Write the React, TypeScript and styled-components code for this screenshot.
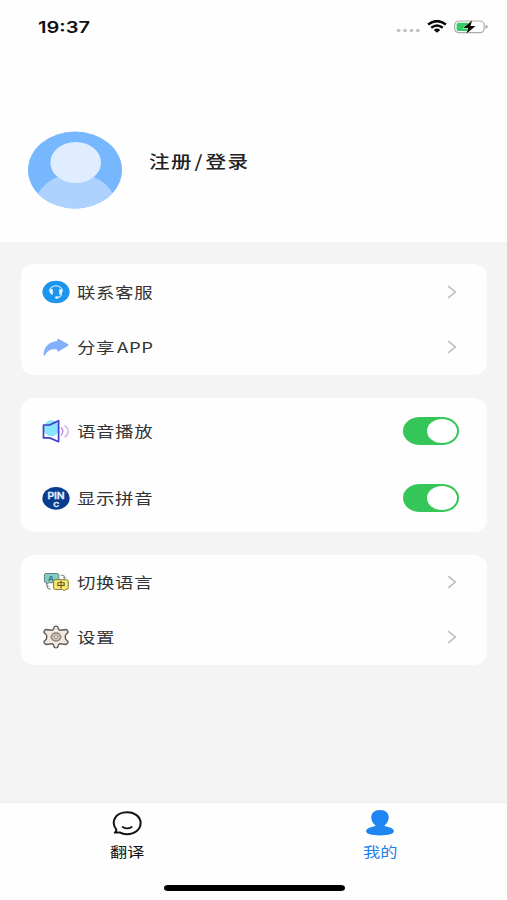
import React from "react";
import styled, { createGlobalStyle } from "styled-components";

const GlobalStyle = createGlobalStyle`
  * { box-sizing: border-box; }
  html, body { margin: 0; padding: 0; }
  body {
    background: #f3f3f3;
    font-family: "Noto Sans CJK SC", "Noto Sans", sans-serif;
    color: #333;
  }
  svg { display: block; flex: none; }
`;

const Screen = styled.div`
  width: 507px;
  height: 900px;
  display: flex;
  flex-direction: column;
  overflow: hidden;
  background: #f4f4f4;
`;

const Header = styled.header`
  height: 242px;
  background: #fefefe;
  flex: none;
`;

const StatusBar = styled.div`
  height: 54px;
  padding: 0 18px 0 38px;
  display: flex;
  align-items: center;
  justify-content: space-between;
`;

const Clock = styled.span`
  font: 600 16.2px/20px Inter, sans-serif;
  color: #111;
  transform: scaleX(1.24);
  transform-origin: left center;
`;

const StatusIcons = styled.div`
  display: flex;
  align-items: center;
  gap: 7px;
`;

const Profile = styled.div`
  display: flex;
  padding: 77px 0 0 28px;
  gap: 27px;
`;

const ProfileName = styled.span`
  margin-top: 17px;
  font-size: 17px;
  line-height: 26px;
  font-weight: 500;
  letter-spacing: 1.1px;
  color: #222;
  white-space: nowrap;
  transform: scaleX(1.21);
  transform-origin: left center;
`;

const Slash = styled.span`
  margin: 0 1.4px 0 1.4px;
`;

const Main = styled.main`
  flex: 1;
  padding: 22px 20px 0 21px;
  display: flex;
  flex-direction: column;
  gap: 23px;
`;

const Card = styled.section<{ $height: number; $inset?: number }>`
  height: ${(p) => p.$height}px;
  padding-top: ${(p) => p.$inset ?? 0}px;
  flex: none;
  display: flex;
  flex-direction: column;
  background: #fefefe;
  border-radius: 14px / 12px;
`;

const Row = styled.div`
  flex: 1;
  display: flex;
  align-items: center;
  padding: 0 28px 1px 21px;
`;

const RowLabel = styled.span`
  margin: -3px 0 0 7px;
  flex: 1;
  font-size: 15.2px;
  line-height: 22px;
  letter-spacing: 0.5px;
  white-space: nowrap;
  transform: scaleX(1.215);
  transform-origin: left center;
`;

const Latin = styled.span`
  margin-left: 1.6px;
`;

const ChevronBox = styled.div`
  padding-right: 2px;
`;

const Toggle = styled.div`
  width: 56px;
  height: 28px;
  padding: 2px;
  display: flex;
  justify-content: flex-end;
  border-radius: 17px / 14px;
  background: #34c658;
`;

const Knob = styled.div`
  width: 30px;
  height: 24px;
  border-radius: 50%;
  background: #fff;
`;

const BottomBar = styled.footer`
  height: 98px;
  flex: none;
  display: flex;
  flex-direction: column;
  align-items: center;
  background: #fefefe;
  border-top: 1px solid #ececec;
`;

const Tabs = styled.nav`
  width: 100%;
  height: 82px;
  display: grid;
  grid-template-columns: 1fr 1fr;
`;

const Tab = styled.div<{ $active?: boolean }>`
  display: flex;
  flex-direction: column;
  align-items: center;
  padding-top: 6px;
  color: ${(p) => (p.$active ? "#1c80f0" : "#111")};
`;

const TabLabel = styled.span`
  margin-top: 4px;
  font-size: 14.2px;
  line-height: 20px;
  transform: scaleX(1.21);
`;

const HomeIndicator = styled.div`
  width: 181px;
  height: 6px;
  margin: 0 0 0 1px;
  border-radius: 4px / 3px;
  background: #000;
`;

const SignalDots = () => (
  <svg width="25" height="14" viewBox="0 0 25 14" fill="#c4c4c4">
    <ellipse cx="3.6" cy="10.5" rx="2" ry="1.7" />
    <ellipse cx="10" cy="10.5" rx="2" ry="1.7" />
    <ellipse cx="16.4" cy="10.5" rx="2" ry="1.7" />
    <ellipse cx="22.8" cy="10.5" rx="2" ry="1.7" />
  </svg>
);

const WifiIcon = () => (
  <svg width="20" height="14" viewBox="0 0 20 14" fill="none" stroke="#090909">
    <path d="M1.1 4.6Q10-2.4 18.9 4.6" strokeWidth="2.5" />
    <path d="M4.2 7.7Q10 3.1 15.8 7.7" strokeWidth="2.4" />
    <path d="M6.8 10Q10 7.2 13.2 10L10 12.7Z" fill="#090909" stroke="none" />
  </svg>
);

const BatteryIcon = () => (
  <svg width="35" height="14" viewBox="0 0 35 14">
    <rect x=".7" y="1" width="29.5" height="11.6" rx="4.5" ry="3.8" fill="#fff" stroke="#aaa" strokeWidth="1.2" />
    <path d="M4.5 2.7H14V11H4.5Q2.6 11 2.6 9.3V4.5Q2.6 2.7 4.5 2.7Z" fill="#32cd63" />
    <path d="M31.5 4.8Q33.8 5.3 33.8 6.8T31.5 8.8Z" fill="#aaa" />
    <path d="M18.2.3 9.4 8.1H14.3L12.3 13.8 21.5 5.9H16.4Z" fill="#080808" stroke="#fff" strokeWidth=".8" paintOrder="stroke" />
  </svg>
);

const Avatar = () => (
  <svg width="94" height="78" viewBox="0 0 94 78">
    <defs>
      <clipPath id="avatar-clip"><ellipse cx="47" cy="39" rx="47" ry="38.5" /></clipPath>
    </defs>
    <g clipPath="url(#avatar-clip)">
      <rect width="94" height="78" fill="#76b7fd" />
      <ellipse cx="47.5" cy="78.5" rx="42" ry="36" fill="#aed2fe" />
      <ellipse cx="47.7" cy="31.5" rx="25.3" ry="20.6" fill="#e0edfe" />
    </g>
  </svg>
);

const ServiceIcon = () => (
  <svg width="28" height="24" viewBox="0 0 28 24" fill="none">
    <ellipse cx="14" cy="12" rx="13.6" ry="11.3" fill="#1d94ed" />
    <path d="M7.6 11.5C7.6 4 20.4 4 20.4 11.5" stroke="#d9efff" strokeWidth="1.2" />
    <path d="M10.8 8.9C8.4 9 7.6 10.1 7.8 11.9S9.6 14.7 10.8 14.5ZM17.2 8.9C19.6 9 20.4 10.1 20.2 11.9S18.4 14.7 17.2 14.5Z" fill="#eef8ff" />
    <path d="M19.7 13.5Q19.1 17.2 15 17.6" stroke="#d9efff" strokeWidth="1.3" />
    <ellipse cx="14.8" cy="17.5" rx="1.7" ry="1.2" fill="#eef8ff" />
  </svg>
);

const ShareIcon = () => (
  <svg width="28" height="24" viewBox="0 0 28 24">
    <path
      d="M1.6 20.3C1.4 12.5 6.4 6.6 15.2 6V4.6Q15.3 3.1 16.8 4L25.8 8.9Q27.5 10 25.8 11.1L16.8 16.3Q15.3 17 15.2 15.5V14.4C9.2 13.8 5.7 15.3 3.2 20Q2.3 21.4 1.6 20.3Z"
      fill="#82b0fb"
    />
  </svg>
);

const SpeakerIcon = () => (
  <svg width="28" height="24" viewBox="0 0 28 24" fill="none">
    <ellipse cx="9.5" cy="9.3" rx="7.8" ry="8" fill="#87e6fc" />
    <path d="M1.5 6H7.6L16.6 1.7V22.7L7.6 18.9H1.5Z" stroke="#403dcc" strokeWidth="1.7" strokeLinejoin="round" />
    <path d="M19.3 8.8Q22.5 12.4 19.3 16" stroke="#b88af4" strokeWidth="1.4" strokeLinecap="round" />
    <path d="M23 6.8Q29.5 12.4 23 18" stroke="#d0a5f7" strokeWidth="1.4" strokeLinecap="round" />
  </svg>
);

const BadgeText = styled.text`
  font-family: Inter, "Noto Sans CJK SC", sans-serif;
  font-weight: 600;
  text-anchor: middle;
`;

const PinyinIcon = () => (
  <svg width="28" height="24" viewBox="0 0 28 24">
    <ellipse cx="14" cy="12.3" rx="13.6" ry="11.4" fill="#073c8e" />
    <g fill="#e5efff" stroke="#e5efff" strokeWidth=".3">
      <BadgeText transform="translate(14 13) scale(1.22 1)" fontSize="8.4">PIN</BadgeText>
      <BadgeText transform="translate(14.3 20.6) scale(1.22 1)" fontSize="6.6">C</BadgeText>
    </g>
  </svg>
);

const LanguageIcon = () => (
  <svg width="28" height="24" viewBox="0 0 28 24" fill="none">
    <path d="M18.5 5.2H20.5Q22.5 5.2 22.5 8M5.5 15.5V17.2Q5.5 19 8.7 19" stroke="#888" strokeWidth="1.1" />
    <path d="m20.8 7 1.7 1.8L24.2 7M4 16.8l1.5-1.7L7 16.8" stroke="#888" strokeWidth=".8" />
    <path d="M4 3.5H15Q16.8 3.5 16.8 5V12.7H6.8L4.5 14.8V12.7H4Q2.4 12.7 2.4 11V5Q2.4 3.5 4 3.5Z" fill="#7acfc6" stroke="#71817e" strokeWidth="1" />
    <BadgeText transform="translate(9 10.9) scale(1.2 1)" fontSize="6.8" fill="#44716e">A</BadgeText>
    <path d="M13.3 9.7H24.5Q26.2 9.7 26.2 11.2V17.8Q26.2 19.4 24.5 19.4H23.5L22 20.9 20.5 19.4H13.3Q11.6 19.4 11.6 17.8V11.2Q11.6 9.7 13.3 9.7Z" fill="#f9ed70" stroke="#81733c" strokeWidth="1" />
    <BadgeText transform="translate(19 17.3) scale(1.2 1)" fontSize="7.4" fill="#625b29">中</BadgeText>
  </svg>
);

const GearIcon = () => (
  <svg width="28" height="24" viewBox="0 0 28 24" strokeLinejoin="round">
    <path
      d="M11.2 4.7 12.3 1.7Q14 .5 15.7 1.7L16.8 4.7Q18.2 5.5 20.2 5L24 4.5Q26.3 5.6 26 7.4L23.7 9.7Q22.8 12 23.7 14.3L26 16.6Q26.3 18.4 24 19.5L20.2 19Q18.2 18.5 16.8 19.3L15.7 22.3Q14 23.5 12.3 22.3L11.2 19.3Q9.8 18.5 7.8 19L4 19.5Q1.7 18.4 2 16.6L4.3 14.3Q5.2 12 4.3 9.7L2 7.4Q1.7 5.6 4 4.5L7.8 5Q9.8 5.5 11.2 4.7Z"
      fill="#f1e9e0" stroke="#665d58" strokeWidth="1.4"
    />
    <ellipse cx="14" cy="12" rx="4.7" ry="3.9" fill="#d2c7b8" stroke="#8b8175" strokeWidth="1.5" />
    <ellipse cx="14" cy="12" rx="1.8" ry="1.5" fill="#f4eee5" stroke="#8b8175" strokeWidth=".8" />
  </svg>
);

const Chevron = () => (
  <ChevronBox>
    <svg width="9" height="14" viewBox="0 0 9 14" fill="none" stroke="#bdbdbd" strokeWidth="1.6">
      <path d="M.3 1.2 7.3 7 .3 12.8" />
    </svg>
  </ChevronBox>
);

const ChatIcon = () => (
  <svg width="30" height="28" viewBox="0 0 30 28" fill="none" stroke="#131313" strokeLinecap="round" strokeLinejoin="round">
    <path d="M4.2 20.3C-1.2 13.5 2.5 3.2 15.2 3.2C23 3.2 28.6 8 28.6 14.1C28.6 20.4 22.8 25.3 15 25.3C11.7 25.3 9.6 24.6 7.6 23.4L2.8 23.6Q4.7 22.5 4.2 20.3Z" strokeWidth="2" />
    <path d="M10.7 18Q15.2 20.9 19.7 18" strokeWidth="1.8" />
  </svg>
);

const PersonIcon = () => (
  <svg width="30" height="28" viewBox="0 0 30 28" fill="#2184f3">
    <path d="M15 1C21 1 23.9 4.3 23.7 8.8C23.6 12.4 21.6 15 19.6 16.3Q19.5 17 20.8 17.4C26 18.1 28.9 20 28.9 22.1C28.9 25 23.5 26.5 15 26.5S1.1 25 1.1 22.1C1.1 20 4 18.1 9.2 17.4Q10.5 17 10.4 16.3C8.4 15 6.4 12.4 6.3 8.8C6.1 4.3 9 1 15 1Z" />
  </svg>
);

type SettingProps = { icon: React.ReactNode; label: React.ReactNode; toggle?: boolean };

const Setting = ({ icon, label, toggle }: SettingProps) => (
  <Row>
    {icon}
    <RowLabel>{label}</RowLabel>
    {toggle ? <Toggle role="switch" aria-checked="true"><Knob /></Toggle> : <Chevron />}
  </Row>
);

export default function App() {
  return (
    <>
      <GlobalStyle />
      <Screen>
        <Header>
          <StatusBar>
            <Clock>19:37</Clock>
            <StatusIcons><SignalDots /><WifiIcon /><BatteryIcon /></StatusIcons>
          </StatusBar>
          <Profile>
            <Avatar />
            <ProfileName>注册<Slash>/</Slash>登录</ProfileName>
          </Profile>
        </Header>
        <Main>
          <Card $height={111} $inset={1}>
            <Setting icon={<ServiceIcon />} label="联系客服" />
            <Setting icon={<ShareIcon />} label={<>分享<Latin>APP</Latin></>} />
          </Card>
          <Card $height={134}>
            <Setting icon={<SpeakerIcon />} label="语音播放" toggle />
            <Setting icon={<PinyinIcon />} label="显示拼音" toggle />
          </Card>
          <Card $height={110}>
            <Setting icon={<LanguageIcon />} label="切换语言" />
            <Setting icon={<GearIcon />} label="设置" />
          </Card>
        </Main>
        <BottomBar>
          <Tabs>
            <Tab><ChatIcon /><TabLabel>翻译</TabLabel></Tab>
            <Tab $active><PersonIcon /><TabLabel>我的</TabLabel></Tab>
          </Tabs>
          <HomeIndicator />
        </BottomBar>
      </Screen>
    </>
  );
}
